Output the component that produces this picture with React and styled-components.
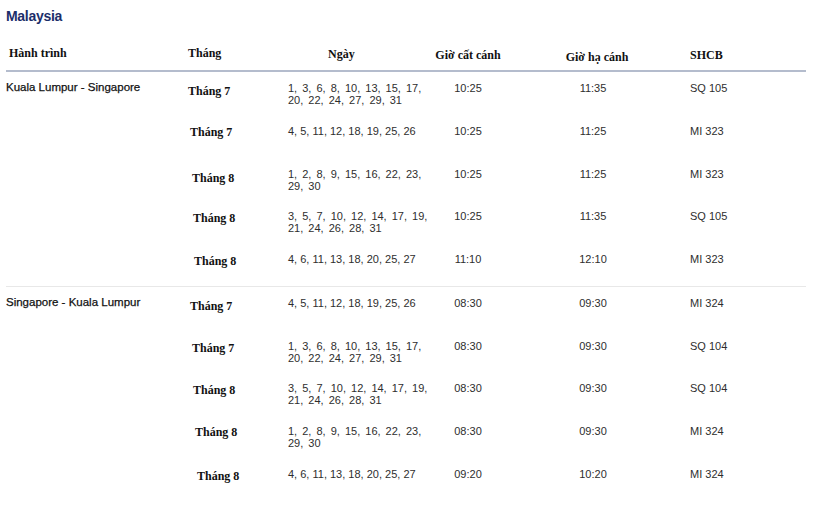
import React from 'react'
import styled, { createGlobalStyle } from 'styled-components'

const GlobalStyle = createGlobalStyle`
    body {
        margin: 0;
        background: #fff;
        font-family: "Liberation Sans", Arial, sans-serif;
    }
`;

const groups = [
    {
        route: 'Kuala Lumpur - Singapore',
        rows: [
            { month: 'Tháng 7', mx: 2, my: 3, days: ['1, 3, 6, 8, 10, 13, 15, 17,', '20, 22, 24, 27, 29, 31'], dep: '10:25', arr: '11:35', code: 'SQ 105' },
            { month: 'Tháng 7', mx: 4, my: 1, days: ['4, 5, 11, 12, 18, 19, 25, 26'], dep: '10:25', arr: '11:25', code: 'MI 323' },
            { month: 'Tháng 8', mx: 6, my: 4, days: ['1, 2, 8, 9, 15, 16, 22, 23,', '29, 30'], dep: '10:25', arr: '11:25', code: 'MI 323' },
            { month: 'Tháng 8', mx: 7, my: 2, days: ['3, 5, 7, 10, 12, 14, 17, 19,', '21, 24, 26, 28, 31'], dep: '10:25', arr: '11:35', code: 'SQ 105' },
            { month: 'Tháng 8', mx: 8, my: 2, days: ['4, 6, 11, 13, 18, 20, 25, 27'], dep: '11:10', arr: '12:10', code: 'MI 323' },
        ],
    },
    {
        route: 'Singapore - Kuala Lumpur',
        rows: [
            { month: 'Tháng 7', mx: 4, my: 3, days: ['4, 5, 11, 12, 18, 19, 25, 26'], dep: '08:30', arr: '09:30', code: 'MI 324' },
            { month: 'Tháng 7', mx: 6, my: 2, days: ['1, 3, 6, 8, 10, 13, 15, 17,', '20, 22, 24, 27, 29, 31'], dep: '08:30', arr: '09:30', code: 'SQ 104' },
            { month: 'Tháng 8', mx: 7, my: 2, days: ['3, 5, 7, 10, 12, 14, 17, 19,', '21, 24, 26, 28, 31'], dep: '08:30', arr: '09:30', code: 'SQ 104' },
            { month: 'Tháng 8', mx: 9, my: 1, days: ['1, 2, 8, 9, 15, 16, 22, 23,', '29, 30'], dep: '08:30', arr: '09:30', code: 'MI 324' },
            { month: 'Tháng 8', mx: 11, my: 2, days: ['4, 6, 11, 13, 18, 20, 25, 27'], dep: '09:20', arr: '10:20', code: 'MI 324' },
        ],
    },
]

const App = () => {
    return (
        <Page>
            <GlobalStyle />
            <Title>Malaysia</Title>
            <HeadRow>
                <HeadCell dx={3}>Hành trình</HeadCell>
                <HeadCell dx={2}>Tháng</HeadCell>
                <HeadCell dx={42} dy={1}>Ngày</HeadCell>
                <HeadCell center dy={2}>Giờ cất cánh</HeadCell>
                <HeadCell center dx={8} dy={4}>Giờ hạ cánh</HeadCell>
                <HeadCell dx={24} dy={2}>SHCB</HeadCell>
            </HeadRow>
            {groups.map((g, gi) => (
                <Group key={gi} divider={gi < groups.length - 1}>
                    {g.rows.map((r, ri) => (
                        <Row key={ri}>
                            <Route>{ri === 0 ? g.route : ''}</Route>
                            <Month dx={r.mx} dy={r.my}>{r.month}</Month>
                            <Days wide={r.days.length > 1}>
                                {r.days.map((line, li) => (
                                    <div key={li}>{line}</div>
                                ))}
                            </Days>
                            <Cell center>{r.dep}</Cell>
                            <Cell center>{r.arr}</Cell>
                            <Cell dx={24}>{r.code}</Cell>
                        </Row>
                    ))}
                </Group>
            ))}
        </Page>
    )
}

const Page = styled.div`
    width: 800px;
    padding: 8px 0 0 6px;
`;

const Title = styled.h2`
    margin: 0;
    font-size: 14px;
    line-height: 17px;
    font-weight: bold;
    color: #1c2e6a;
    letter-spacing: -0.3px;
`;

const columns = `180px 100px 130px 104px 146px 1fr`;

const HeadRow = styled.div`
    display: grid;
    grid-template-columns: ${columns};
    margin-top: 15px;
    height: 30px;
    border-bottom: 2px solid #b4bccd;
    font-family: "Liberation Serif", "Times New Roman", serif;
    font-weight: bold;
    font-size: 12px;
    line-height: 14px;
    color: #111;
`;

const HeadCell = styled.div`
    padding-top: ${p => 6 + (p.dy || 0)}px;
    padding-left: ${p => p.dx || 0}px;
    text-align: ${p => (p.center ? 'center' : 'left')};
`;

const Group = styled.div`
    border-bottom: ${p => (p.divider ? '1px solid #e8e8e8' : 'none')};
`;

const Row = styled.div`
    display: grid;
    grid-template-columns: ${columns};
    align-items: start;
    height: 42.75px;
    font-size: 11px;
    line-height: 12px;
    color: #2e2e2e;
`;

const Cell = styled.div`
    padding-top: 10px;
    padding-left: ${p => p.dx || 0}px;
    text-align: ${p => (p.center ? 'center' : 'left')};
    white-space: nowrap;
`;

const Route = styled.div`
    padding-top: 9px;
    font-size: 11.5px;
    line-height: 13px;
    color: #111;
    -webkit-text-stroke: 0.25px #111;
    white-space: nowrap;
`;

const Month = styled.div`
    padding-top: ${p => 9 + p.dy}px;
    padding-left: ${p => p.dx}px;
    font-family: "Liberation Serif", "Times New Roman", serif;
    font-weight: bold;
    font-size: 12px;
    line-height: 14px;
    color: #111;
`;

const Days = styled.div`
    padding-top: 10px;
    padding-left: 2px;
    white-space: nowrap;
    word-spacing: ${p => (p.wide ? '2px' : '0')};
`;

export default App
